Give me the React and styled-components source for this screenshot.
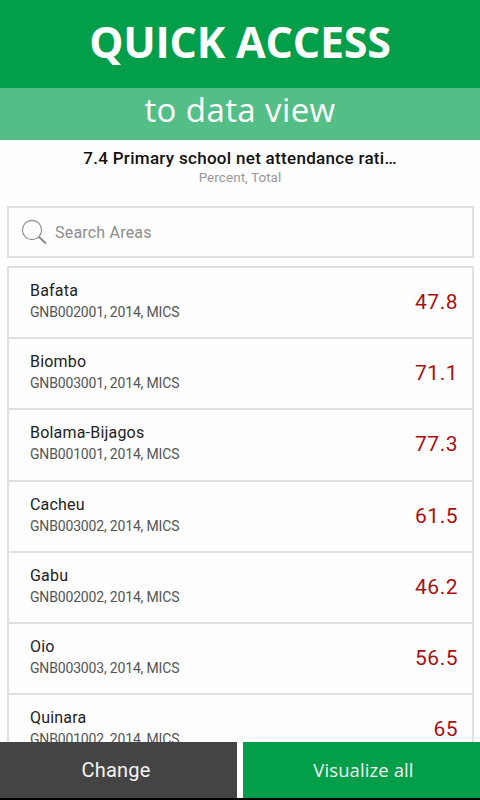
import styled, { createGlobalStyle } from 'styled-components';

const GlobalStyle = createGlobalStyle`
    * {
        box-sizing: border-box;
    }
    body {
        margin: 0;
        background: #fff;
        font-family: Roboto, 'Liberation Sans', sans-serif;
    }
`;

const Screen = styled.div`
    width: 480px;
    height: 800px;
    display: flex;
    flex-direction: column;
    overflow: hidden;
    background: #fefefe;
    border-bottom: 2px solid #000;
`;

const Banner = styled.h1`
    flex: none;
    height: 88px;
    margin: 0;
    background: #029e49;
    color: #fff;
    font: 700 43px/84px 'Open Sans', sans-serif;
    letter-spacing: -0.2px;
    text-align: center;
    white-space: nowrap;
`;

const SubBanner = styled.div`
    flex: none;
    height: 52px;
    background: #54be87;
    color: #fff;
    font: 400 33px/44px 'Open Sans', sans-serif;
    letter-spacing: 0.4px;
    text-align: center;
    white-space: nowrap;
`;

const Heading = styled.header`
    flex: none;
    height: 67px;
    padding-top: 8px;
    text-align: center;
`;

const Title = styled.h2`
    margin: 0;
    color: #111;
    font-size: 17px;
    font-weight: 500;
    line-height: 20px;
    letter-spacing: 0.3px;
`;

const Unit = styled.p`
    margin: 0;
    color: #999;
    font-size: 13.5px;
    line-height: 19px;
    letter-spacing: 0.05px;
`;

const SearchBox = styled.div`
    flex: none;
    display: flex;
    align-items: center;
    height: 52px;
    margin: -1px 6px 8px 7px;
    padding-left: 12px;
    border: 2px solid #e0e0e0;
    color: #8c8c8c;
    font-size: 16px;
    letter-spacing: 0.2px;
`;

const SearchIcon = styled.svg`
    width: 28px;
    height: 28px;
    margin-right: 6px;
`;

const AreaList = styled.ul`
    flex: 1;
    min-height: 0;
    margin: 0 6px 0 7px;
    padding: 0;
    overflow: hidden;
    list-style: none;
    border: 2px solid #e0e0e0;
    border-bottom: none;
`;

const AreaRow = styled.li`
    display: flex;
    justify-content: space-between;
    height: 71.2px;
    padding: 13px 14px 0 21px;
    border-bottom: 2px solid #e0e0e0;
`;

const AreaName = styled.div`
    color: #222;
    font-size: 16px;
    line-height: 20px;
    letter-spacing: 0.2px;
`;

const AreaInfo = styled.div`
    color: #555;
    font-size: 14px;
    line-height: 22px;
    letter-spacing: -0.17px;
`;

const AreaValue = styled.div`
    padding-top: 9px;
    color: #a80f0f;
    font-size: 21px;
    line-height: 24px;
    letter-spacing: 0.5px;
`;

const Footer = styled.footer`
    flex: none;
    display: grid;
    grid-template-columns: 237px 237px;
    column-gap: 6px;
    height: 56px;
`;

const FooterButton = styled.button`
    border: none;
    padding: ${(props) => props.$padding};
    background: ${(props) => props.$color};
    color: #f4f4f4;
    font-family: ${(props) => props.$font}, sans-serif;
    font-size: ${(props) => props.$size};
    letter-spacing: ${(props) => props.$spacing};
`;

const areas = [
    { name: 'Bafata', code: 'GNB002001', value: '47.8' },
    { name: 'Biombo', code: 'GNB003001', value: '71.1' },
    { name: 'Bolama-Bijagos', code: 'GNB001001', value: '77.3' },
    { name: 'Cacheu', code: 'GNB003002', value: '61.5' },
    { name: 'Gabu', code: 'GNB002002', value: '46.2' },
    { name: 'Oio', code: 'GNB003003', value: '56.5' },
    { name: 'Quinara', code: 'GNB001002', value: '65' },
];

export default function App() {
    return (
        <>
            <GlobalStyle />
            <Screen>
                <Banner>QUICK ACCESS</Banner>
                <SubBanner>to data view</SubBanner>
                <Heading>
                    <Title>7.4 Primary school net attendance rati…</Title>
                    <Unit>Percent, Total</Unit>
                </Heading>
                <SearchBox>
                    <SearchIcon viewBox="0 0 28 28" fill="none" stroke="#8c8c8c">
                        <circle cx="11" cy="12" r="9.6" strokeWidth="1.1" />
                        <path d="M17.8 18.8 L25 25.6" strokeWidth="2" />
                    </SearchIcon>
                    Search Areas
                </SearchBox>
                <AreaList>
                    {areas.map((area) => (
                        <AreaRow key={area.code}>
                            <div>
                                <AreaName>{area.name}</AreaName>
                                <AreaInfo>{area.code}, 2014, MICS</AreaInfo>
                            </div>
                            <AreaValue>{area.value}</AreaValue>
                        </AreaRow>
                    ))}
                </AreaList>
                <Footer>
                    <FooterButton
                        $color="#444"
                        $font="Roboto"
                        $size="20px"
                        $spacing="0.2px"
                        $padding="0 5px 0 0"
                    >
                        Change
                    </FooterButton>
                    <FooterButton
                        $color="#029e49"
                        $font="'Open Sans'"
                        $size="18.5px"
                        $spacing="0.1px"
                        $padding="0 0 2px 4px"
                    >
                        Visualize all
                    </FooterButton>
                </Footer>
            </Screen>
        </>
    );
}
